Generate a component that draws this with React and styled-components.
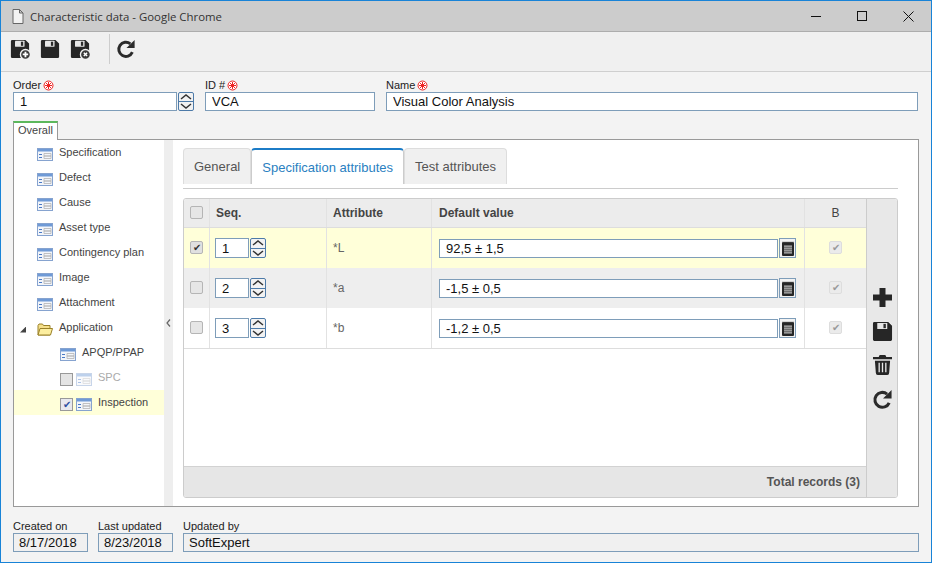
import React from 'react';
import styled, { createGlobalStyle } from 'styled-components';

const GlobalStyle = createGlobalStyle`
	html, body { margin: 0; padding: 0; background: #f3f3f3; }
	* { box-sizing: border-box; }
	body { font-family: "Liberation Sans", Arial, sans-serif; }
`;

const Floppy = ({ size = 20, badge }) => (
	<svg width={size} height={size} viewBox="0 0 22 22">
		<path d="M2.500 1H17l4 4v14.500a1.500 1.500 0 0 1-1.500 1.500h-17A1.500 1.500 0 0 1 1 19.500v-17A1.500 1.500 0 0 1 2.500 1z" fill="#262626" />
		<rect x="5.500" y="2" width="10.500" height="6.500" rx=".5" fill="#e6e6e6" />
		<rect x="12" y="3" width="2.500" height="4.500" fill="#2b2b2b" />
		{badge && <circle cx="17" cy="17" r="5.500" fill="#3a3a3a" stroke="#f0f0f0" strokeWidth="1.500" />}
		{badge === 'plus' && <path d="M14 17h6M17 14v6" stroke="#fff" strokeWidth="2" />}
		{badge === 'x' && <path d="M15.200 15.200l3.600 3.600M18.800 15.200l-3.600 3.600" stroke="#fff" strokeWidth="1.600" />}
	</svg>
);

const Refresh = ({ size = 20 }) => (
	<svg width={size} height={size} viewBox="0 0 22 22">
		<path d="M18 14.500A7.800 7.800 0 1 1 15.800 5.300" fill="none" stroke="#2b2b2b" strokeWidth="3.200" />
		<path d="M20.500 1v9h-9z" fill="#2b2b2b" />
	</svg>
);

const Plus = () => (
	<svg width="19" height="19" viewBox="0 0 19 19">
		<path d="M6.500 0h6v6.500H19v6h-6.500V19h-6v-6.500H0v-6h6.500z" fill="#262626" />
	</svg>
);

const Trash = () => (
	<svg width="19" height="20" viewBox="0 0 20 21">
		<path d="M7 0h6l1 2h6v2.500H0V2h6z" fill="#262626" />
		<path d="M2 6h16l-1 13a2 2 0 0 1-2 2H5a2 2 0 0 1-2-2z" fill="#262626" />
		<path d="M6.500 8v10M10 8v10M13.500 8v10" stroke="#e8e8e8" strokeWidth="1.400" />
	</svg>
);

const PageIcon = () => (
	<svg width="12" height="15" viewBox="0 0 12 15">
		<path d="M1 .5h6.500L11 4v10.500H1z M7.500 .5V4H11" fill="#f2f2f2" stroke="#666" />
	</svg>
);

const FormSvg = styled.svg`
	flex: none;
	margin-top: 4px;
	opacity: ${(p) => (p.$faded ? 0.45 : 1)};
`;

const FormIcon = ({ faded }) => (
	<FormSvg $faded={faded} width="16" height="13" viewBox="0 0 16 13">
		<rect x=".5" y=".5" width="15" height="12" fill="#f2f5fa" stroke="#86a3cf" />
		<rect x="1" y="1" width="14" height="2.500" fill="#6f9ad6" />
		<path d="M2 6.500h3M2 9.500h3" stroke="#4a7ac6" strokeWidth="1.200" />
		<path d="M7 5.500h7v2.500H7zM7 8h7v2.500H7z" fill="none" stroke="#b4b4b4" strokeWidth=".8" />
	</FormSvg>
);

const FolderIcon = () => (
	<FormSvg width="16" height="13" viewBox="0 0 16 13">
		<path d="M1 2.500l1-1.500h3.500l1 1.500h6.500v9.500H1z" fill="#f5df8a" stroke="#9a8128" />
		<path d="M3 5.500h12.500l-2 6.500H1z" fill="#fcee9f" stroke="#9a8128" />
	</FormSvg>
);

const CalendarIcon = () => (
	<svg width="12" height="15" viewBox="0 0 12 15">
		<rect x="0" y="1" width="12" height="14" rx="1" fill="#262626" />
		<path d="M1 .5v1M3 .5v1M5 .5v1M7 .5v1M9 .5v1M11 .5v1" stroke="#777" />
		<rect x="2" y="4" width="8" height="9" fill="#6f6f6f" />
		<path d="M2 5.500h8M2 7.500h8M2 9.500h8M2 11.500h8" stroke="#999" />
	</svg>
);

const Chevrons = () => (
	<>
		<SpinPart><svg width="12" height="6" viewBox="0 0 12 6"><path d="M1 5l5-4 5 4" fill="none" stroke="#333" strokeWidth="1.500" /></svg></SpinPart>
		<SpinPart><svg width="12" height="6" viewBox="0 0 12 6"><path d="M1 1l5 4 5-4" fill="none" stroke="#333" strokeWidth="1.500" /></svg></SpinPart>
	</>
);

const treeItems = ['Specification', 'Defect', 'Cause', 'Asset type', 'Contingency plan', 'Image', 'Attachment'];

const rows = [
	{ seq: 1, attr: '*L', value: '92,5 ± 1,5', tone: 'selected', checked: true },
	{ seq: 2, attr: '*a', value: '-1,5 ± 0,5', tone: 'even' },
	{ seq: 3, attr: '*b', value: '-1,2 ± 0,5', tone: 'odd' },
];

const App = () => {
	return (
		<Window>
			<GlobalStyle />
			<TitleBar>
				<PageIcon />
				<TitleText>Characteristic data - Google Chrome</TitleText>
				<WindowButtons>
					<WinBtn><Minimize /></WinBtn>
					<WinBtn><Maximize /></WinBtn>
					<WinBtn>
						<svg width="11" height="11" viewBox="0 0 11 11"><path d="M.5 .5l10 10M10.500 .5l-10 10" stroke="#111" /></svg>
					</WinBtn>
				</WindowButtons>
			</TitleBar>
			<Toolbar>
				<ToolBtn><Floppy badge="plus" /></ToolBtn>
				<ToolBtn><Floppy /></ToolBtn>
				<ToolBtn><Floppy badge="x" /></ToolBtn>
				<ToolDivider />
				<ToolBtn><Refresh /></ToolBtn>
			</Toolbar>
			<Form>
				<FieldRow>
					<Field $w={181}>
						<Label>Order<Req /></Label>
						<SpinWrap>
							<Input $grow value="1" readOnly />
							<Spin $h={19}><Chevrons /></Spin>
						</SpinWrap>
					</Field>
					<Field $w={170}>
						<Label>ID #<Req /></Label>
						<Input value="VCA" readOnly />
					</Field>
					<Field $w={532}>
						<Label>Name<Req /></Label>
						<Input value="Visual Color Analysis" readOnly />
					</Field>
				</FieldRow>
				<OverallTab>Overall</OverallTab>
				<Panel>
					<Tree>
						{treeItems.map((t) => (
							<TreeRow key={t} $indent={23}>
								<FormIcon />
								<TreeLabel>{t}</TreeLabel>
							</TreeRow>
						))}
						<TreeRow $indent={6}>
							<Arrow />
							<FolderIcon />
							<TreeLabel>Application</TreeLabel>
						</TreeRow>
						<TreeRow $indent={46}>
							<FormIcon />
							<TreeLabel>APQP/PPAP</TreeLabel>
						</TreeRow>
						<TreeRow $indent={46}>
							<TreeCheck $off />
							<FormIcon faded />
							<TreeLabel $off>SPC</TreeLabel>
						</TreeRow>
						<TreeRow $indent={46} $active>
							<TreeCheck>✔</TreeCheck>
							<FormIcon />
							<TreeLabel>Inspection</TreeLabel>
						</TreeRow>
					</Tree>
					<Splitter>
						<svg width="5" height="8" viewBox="0 0 5 8"><path d="M4 .5L1 4l3 3.500" fill="none" stroke="#666" strokeWidth="1.200" /></svg>
					</Splitter>
					<Content>
						<Tabs>
							<TabBtn>General</TabBtn>
							<TabBtn $active>Specification attributes</TabBtn>
							<TabBtn>Test attributes</TabBtn>
						</Tabs>
						<Grid>
							<GridMain>
								<HeadRow>
									<CheckCell><Check /></CheckCell>
									<SeqCell><b>Seq.</b></SeqCell>
									<AttrCell><b>Attribute</b></AttrCell>
									<ValueCell><b>Default value</b></ValueCell>
									<BoolCell>B</BoolCell>
								</HeadRow>
								{rows.map((r) => (
									<Row key={r.seq} $tone={r.tone}>
										<CheckCell><Check $on={r.checked}>{r.checked && '✔'}</Check></CheckCell>
										<SeqCell>
											<Input $small value={r.seq} readOnly />
											<Spin $h={20}><Chevrons /></Spin>
										</SeqCell>
										<AttrCell $light>{r.attr}</AttrCell>
										<ValueCell>
											<Input $grow value={r.value} readOnly />
											<CalBtn><CalendarIcon /></CalBtn>
										</ValueCell>
										<BoolCell><Check $dim>✔</Check></BoolCell>
									</Row>
								))}
								<GridEmpty />
								<GridFooter>Total records (3)</GridFooter>
							</GridMain>
							<SideBar>
								<SideBtn><Plus /></SideBtn>
								<SideBtn><Floppy size={21} /></SideBtn>
								<SideBtn><Trash /></SideBtn>
								<SideBtn><Refresh size={21} /></SideBtn>
							</SideBar>
						</Grid>
					</Content>
				</Panel>
				<FooterRow>
					<Field $w={75}>
						<Label>Created on</Label>
						<ReadOnly value="8/17/2018" readOnly />
					</Field>
					<Field $w={75}>
						<Label>Last updated</Label>
						<ReadOnly value="8/23/2018" readOnly />
					</Field>
					<Field $w={736}>
						<Label>Updated by</Label>
						<ReadOnly value="SoftExpert" readOnly />
					</Field>
				</FooterRow>
			</Form>
		</Window>
	);
};

const ReqSvg = styled.svg`
	margin-left: 2px;
`;

const Req = () => (
	<ReqSvg width="11" height="11" viewBox="0 0 11 11">
		<circle cx="5.500" cy="5.500" r="4.500" fill="#fff" stroke="#e22" />
		<path d="M5.500 2v7M2 5.500h7M3 3l5 5M8 3l-5 5" stroke="#e22" />
	</ReqSvg>
);

const Window = styled.div`
	width: 932px;
	height: 563px;
	display: flex;
	flex-direction: column;
	border: 1px solid #1883d7;
	background: #f3f3f3;
	overflow: hidden;
`;

const TitleBar = styled.div`
	height: 31px;
	flex: none;
	display: flex;
	align-items: center;
	padding-left: 11px;
	background: #cccccc;
	border-bottom: 1px solid #adadad;
`;

const TitleText = styled.span`
	margin-left: 6px;
	font: 11.400px "Open Sans", sans-serif;
	color: #333;
`;

const WindowButtons = styled.div`
	margin-left: auto;
	display: flex;
`;

const WinBtn = styled.div`
	width: 46px;
	height: 30px;
	display: flex;
	align-items: center;
	justify-content: center;
`;

const Minimize = styled.div`
	width: 10px;
	height: 1px;
	background: #111;
`;

const Maximize = styled.div`
	width: 10px;
	height: 10px;
	border: 1px solid #111;
`;

const Toolbar = styled.div`
	height: 40px;
	flex: none;
	display: flex;
	align-items: center;
	padding: 0 0 5px 9px;
	gap: 10px;
	background: #f0f0f0;
	border-bottom: 1px solid #cfcfcf;
`;

const ToolBtn = styled.div`
	width: 20px;
	height: 20px;
`;

const ToolDivider = styled.div`
	width: 1px;
	height: 30px;
	margin: 0 -4px 0 9px;
	background: #cdcdcd;
`;

const Form = styled.div`
	flex: 1;
	display: flex;
	flex-direction: column;
	padding: 6px 12px 0;
`;

const FieldRow = styled.div`
	display: flex;
	gap: 11px;
`;

const Field = styled.div`
	width: ${(p) => p.$w}px;
	display: flex;
	flex-direction: column;
`;

const Label = styled.label`
	display: flex;
	align-items: center;
	height: 14px;
	font: 11px "Liberation Sans", sans-serif;
	color: #222;
`;

const SpinWrap = styled.div`
	display: flex;
	gap: 1px;
`;

const Input = styled.input`
	height: ${(p) => (p.$small ? 20 : 19)}px;
	width: ${(p) => (p.$small ? '34px' : '100%')};
	${(p) => p.$grow && 'flex: 1; min-width: 0;'}
	padding: 0 6px;
	border: 1px solid #7e9db9;
	border-radius: 0;
	outline: none;
	background: #fff;
	font: 13px "Liberation Sans", sans-serif;
	color: #111;
`;

const ReadOnly = styled(Input)`
	background: #f0f0f0;
	padding: 0 5px;
`;

const Spin = styled.div`
	width: 16px;
	height: ${(p) => p.$h}px;
	flex: none;
	display: flex;
	flex-direction: column;
	border: 1px solid #4d7aa8;
	border-radius: 2px;
	background: #f2f2f2;
`;

const SpinPart = styled.div`
	flex: 1;
	display: flex;
	align-items: center;
	justify-content: center;
	& + & { border-top: 1px solid #4d7aa8; }
`;

const OverallTab = styled.div`
	width: 45px;
	height: 19px;
	margin-top: 10px;
	margin-bottom: -1px;
	position: relative;
	z-index: 1;
	padding-left: 4px;
	border: 1px solid #999;
	border-top: 2px solid #5cb85c;
	border-bottom: 0;
	background: #fff;
	font: 11px/14px "Liberation Sans", sans-serif;
	color: #444;
`;

const Panel = styled.div`
	height: 368px;
	display: flex;
	background: #fff;
	border: 1px solid #999;
`;

const Tree = styled.div`
	width: 150px;
	flex: none;
`;

const TreeRow = styled.div`
	height: 25px;
	display: flex;
	align-items: center;
	padding-left: ${(p) => p.$indent}px;
	gap: 6px;
	background: ${(p) => (p.$active ? '#ffffd9' : 'transparent')};
`;

const TreeLabel = styled.span`
	margin-top: -2px;
	font-size: 11px;
	color: ${(p) => (p.$off ? '#aaa' : '#444')};
`;

const Arrow = styled.div`
	width: 6px;
	height: 6px;
	margin: 4px 5px 0 0;
	background: #444;
	clip-path: polygon(100% 0, 100% 100%, 0 100%);
`;

const TreeCheck = styled.div`
	width: 13px;
	height: 13px;
	flex: none;
	margin: 3px -3px 0 0;
	display: flex;
	align-items: center;
	justify-content: center;
	border: 1px solid #999;
	background: ${(p) => (p.$off ? '#e4e4e4' : '#e8e8ee')};
	font-size: 10px;
	color: #2c4fa0;
`;

const Splitter = styled.div`
	width: 9px;
	flex: none;
	display: flex;
	align-items: center;
	justify-content: center;
	background: #eeeeee;
`;

const Content = styled.div`
	flex: 1;
	padding: 8px 20px 8px 10px;
	display: flex;
	flex-direction: column;
`;

const Tabs = styled.div`
	height: 41px;
	flex: none;
	display: flex;
	border-bottom: 1px solid #ccc;
	padding-bottom: 4px;
	margin-bottom: 9px;
`;

const TabBtn = styled.div`
	padding: 7px 10px 0;
	height: 36px;
	font-size: 13px;
	line-height: 22px;
	border: 1px solid ${(p) => (p.$active ? '#ccc' : '#ddd')};
	border-top: ${(p) => (p.$active ? '2px solid #1c7cc7' : '1px solid #ddd')};
	border-bottom: 0;
	border-radius: 4px 4px 0 0;
	background: ${(p) => (p.$active ? '#fff' : '#f0f0f0')};
	color: ${(p) => (p.$active ? '#2a7fc1' : '#555')};
`;

const Grid = styled.div`
	height: 300px;
	display: flex;
	border: 1px solid #ccc;
	border-radius: 3px;
	overflow: hidden;
`;

const GridMain = styled.div`
	flex: 1;
	display: flex;
	flex-direction: column;
	min-width: 0;
`;

const HeadRow = styled.div`
	height: 29px;
	flex: none;
	display: flex;
	background: #ececec;
	border-bottom: 1px solid #ddd;
	font-size: 12px;
	color: #444;
`;

const toneColors = { selected: '#ffffd9', even: '#eeeeee', odd: '#ffffff' };

const Row = styled.div`
	height: 40px;
	flex: none;
	display: flex;
	background: ${(p) => toneColors[p.$tone]};
	font-size: 12px;
	color: #555;
`;

const Cell = styled.div`
	display: flex;
	align-items: center;
	border-right: 1px solid #e2e2e2;
`;

const CheckCell = styled(Cell)`
	width: 26px;
	justify-content: center;
`;

const SeqCell = styled(Cell)`
	width: 117px;
	padding-left: 5px;
	gap: 1px;
	b { margin-left: 1px; }
`;

const AttrCell = styled(Cell)`
	width: 105px;
	padding-left: 6px;
	${(p) => p.$light && 'color: #666;'}
`;

const ValueCell = styled(Cell)`
	width: 373px;
	padding: 0 8px 0 7px;
	gap: 1px;
`;

const BoolCell = styled(Cell)`
	flex: 1;
	justify-content: center;
	border-right: 0;
`;

const Check = styled.div`
	width: 13px;
	height: 13px;
	margin-top: -1px;
	display: flex;
	align-items: center;
	justify-content: center;
	border: 1px solid ${(p) => (p.$dim ? '#ddd' : '#b5b5b5')};
	border-radius: 2px;
	background: ${(p) => (p.$dim ? '#ebebeb' : p.$on ? '#e0e0e0' : '#e6e6e6')};
	font-size: 10px;
	color: ${(p) => (p.$dim ? '#999' : '#333')};
`;

const CalBtn = styled.div`
	width: 17px;
	height: 20px;
	flex: none;
	display: flex;
	align-items: center;
	justify-content: center;
	border: 1px solid #7e9db9;
	background: #f2f2f2;
`;

const GridEmpty = styled.div`
	flex: 1;
	background: #fff;
	border-top: 1px solid #ddd;
`;

const GridFooter = styled.div`
	height: 31px;
	flex: none;
	padding-right: 6px;
	display: flex;
	align-items: center;
	justify-content: flex-end;
	background: #e6e6e6;
	border-top: 1px solid #d2d2d2;
	font-size: 12px;
	font-weight: bold;
	color: #555;
`;

const SideBar = styled.div`
	width: 31px;
	flex: none;
	display: flex;
	flex-direction: column;
	align-items: center;
	justify-content: center;
	gap: 13px;
	background: #e8e8e8;
	border-left: 1px solid #ccc;
`;

const SideBtn = styled.div`
	width: 21px;
	height: 21px;
	display: flex;
	align-items: center;
	justify-content: center;
`;

const FooterRow = styled.div`
	display: flex;
	gap: 10px;
	margin-top: 12px;
`;

export default App;
